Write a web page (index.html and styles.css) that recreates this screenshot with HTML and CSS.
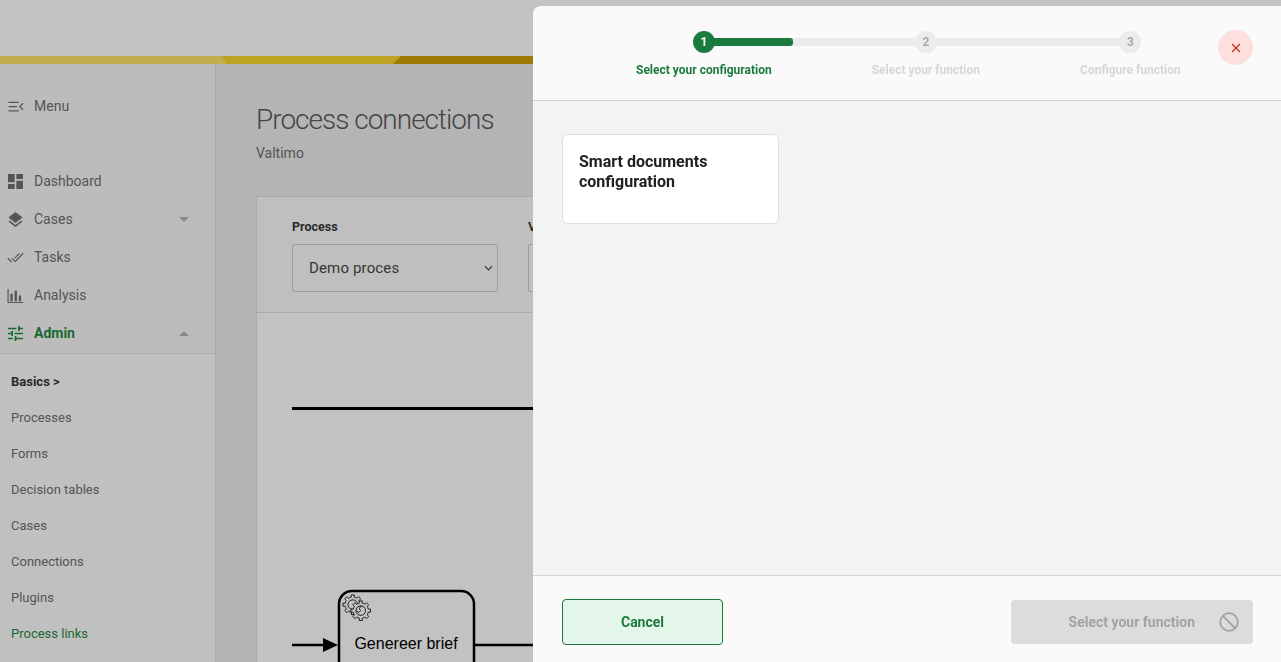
FILE: index.html

```html
<!DOCTYPE html>
<html lang="en">
<head>
  <meta charset="UTF-8">
  <title>Process connections</title>
  <link rel="stylesheet" href="styles.css">
</head>
<body>

  <div class="topbar"></div>
  <svg class="stripe" viewBox="0 0 1281 8" preserveAspectRatio="none">
    <rect width="1281" height="8" fill="#cda000"/>
    <polygon points="0,0 401,0 393,8 0,8" fill="#f7d82d"/>
    <polygon points="0,0 222,0 226,8 0,8" fill="#ffe569"/>
  </svg>

  <div class="page">
    <nav class="sidebar">
      <div class="nav-item menu-toggle">
        <svg class="nav-icon" viewBox="0 0 16 16"><path d="M0 3h11v1.300H0zM0 7.400h9v1.300H0zM0 12h11v1.300H0z" fill="#707070"/><path d="M15.500 4.500 12 8l3.500 3.500" fill="none" stroke="#707070" stroke-width="1.300"/></svg>
        <span>Menu</span>
      </div>
      <ul class="nav-list">
        <li class="nav-item">
          <svg class="nav-icon" viewBox="3 3 18 18"><path d="M3 13h8V3H3v10zm0 8h8v-6H3v6zm10 0h8V11h-8v10zm0-18v6h8V3h-8z"/></svg>
          <span>Dashboard</span>
        </li>
        <li class="nav-item">
          <svg class="nav-icon" viewBox="3 2 18 19"><path d="M11.990 18.540l-7.370-5.730L3 14.070l9 7 9-7-1.630-1.270-7.380 5.740zM12 16l7.360-5.730L21 9l-9-7-9 7 1.630 1.270L12 16z"/></svg>
          <span>Cases</span>
          <i class="caret down"></i>
        </li>
        <li class="nav-item">
          <svg class="nav-icon wide" viewBox="0 4 24 16"><path d="M18 7l-1.200-1.200-6.500 6.500 1.200 1.200L18 7zm4.400-1.600L11.660 16.200 7.480 12.200l-1.200 1.200 5.380 5.400L23.600 6.600l-1.200-1.200zM.4 13.600 6 19l1.200-1.200L1.600 12.400.4 13.600z"/></svg>
          <span>Tasks</span>
        </li>
        <li class="nav-item">
          <svg class="nav-icon wide" viewBox="0 0 17 16"><path d="M0 1h1.200v13.800H17V16H0zM3 6h2.500v8H3zM7.500 3h2.500v11H7.500zM12 8h2.500v6H12z"/></svg>
          <span>Analysis</span>
        </li>
        <li class="nav-item active">
          <svg class="nav-icon" viewBox="3 3 18 18"><path d="M3 17v2h6v-2H3zM3 5v2h10V5H3zm10 16v-2h8v-2h-8v-2h-2v6h2zM7 9v2H3v2h4v2h2V9H7zm14 4v-2H11v2h10zm-6-4h2V7h4V5h-4V3h-2v6z"/></svg>
          <span>Admin</span>
          <i class="caret up"></i>
        </li>
      </ul>
      <ul class="sub-list">
        <li class="sub-head">Basics &gt;</li>
        <li>Processes</li>
        <li>Forms</li>
        <li>Decision tables</li>
        <li>Cases</li>
        <li>Connections</li>
        <li>Plugins</li>
        <li class="current">Process links</li>
      </ul>
    </nav>

    <main class="content">
      <h1>Process connections</h1>
      <p class="subtitle">Valtimo</p>
      <section class="card">
        <div class="card-filters">
          <div class="field">
            <label>Process</label>
            <div class="select">Demo proces
              <svg viewBox="0 0 10 6"><path d="M1 1l4 4 4-4" fill="none" stroke="#444" stroke-width="1.300"/></svg>
            </div>
          </div>
          <div class="field">
            <label>Version</label>
            <div class="select"></div>
          </div>
        </div>
        <svg class="diagram" viewBox="0 0 984 349">
          <defs>
            <path id="gear" d="m 12,18 v -1.71335 c 0.352326,-0.0705 0.703932,-0.17838 1.047628,-0.32133 0.344416,-0.14465 0.665822,-0.32133 0.966377,-0.52145 l 1.19431,1.18005 1.567487,-1.57688 -1.195028,-1.18014 c 0.403376,-0.61394 0.683079,-1.29908 0.825447,-2.01824 l 1.622133,-0.01 v -2.2196 l -1.636514,0.01 c -0.07333,-0.35153 -0.178319,-0.70024 -0.323564,-1.04372 -0.145244,-0.34406 -0.321407,-0.6644 -0.522735,-0.96217 l 1.131035,-1.13631 -1.583305,-1.56293 -1.129598,1.13589 c -0.614052,-0.40108 -1.302883,-0.68093 -2.022633,-0.82247 l 0.0093,-1.61852 h -2.241173 l 0.0042,1.63124 c -0.353763,0.0736 -0.705369,0.17977 -1.049785,0.32371 -0.344415,0.14437 -0.665102,0.32092 -0.9635006,0.52046 l -1.1698628,-1.15823 -1.5667691,1.5792 1.1684265,1.15669 c -0.4026573,0.61283 -0.68308,1.29797 -0.8247287,2.01713 l -1.6588041,0.003 v 2.22174 l 1.6724648,-0.006 c 0.073327,0.35077 0.1797598,0.70243 0.3242851,1.04472 0.1452428,0.34448 0.3214064,0.6644 0.5227339,0.96066 l -1.1993431,1.19723 1.5840256,1.56011 1.1964668,-1.19348 c 0.6140517,0.40346 1.3028827,0.68232 2.0233517,0.82331 l 7.19e-4,1.69892 h 2.226848 z m 0.221462,-3.9957 c -1.788948,0.7502 -3.8576,-0.0928 -4.6097055,-1.87438 -0.7521065,-1.78321 0.090598,-3.84627 1.8802645,-4.59604 1.78823,-0.74936 3.856881,0.0929 4.608987,1.87437 0.752106,1.78165 -0.0906,3.84612 -1.879546,4.59605 z"/>
          </defs>
          <path d="M35 95.500H984" fill="none" stroke="#000" stroke-width="3"/>
          <path d="M35 332H72" fill="none" stroke="#000" stroke-width="2.500"/>
          <path d="M66 325l15 7-15 7z" fill="#000"/>
          <path d="M217 332H984" fill="none" stroke="#000" stroke-width="2.500"/>
          <rect x="82" y="278" width="135" height="120" rx="13" fill="#fff" stroke="#000" stroke-width="2.500"/>
          <use href="#gear" transform="translate(81,277) scale(1.360)" fill="#fff" stroke="#000" stroke-width=".6"/>
          <use href="#gear" transform="translate(89,283) scale(1.360)" fill="#fff" stroke="#000" stroke-width=".6"/>
          <text x="149" y="336" class="task-label">Genereer brief</text>
        </svg>
      </section>
    </main>
  </div>

  <div class="backdrop"></div>

  <aside class="drawer">
    <header class="drawer-head">
      <div class="stepper">
        <div class="step current">
          <div class="step-dot">1</div>
          <div class="step-name">Select your configuration</div>
        </div>
        <div class="step">
          <div class="step-dot">2</div>
          <div class="step-name">Select your function</div>
        </div>
        <div class="step">
          <div class="step-dot">3</div>
          <div class="step-name">Configure function</div>
        </div>
      </div>
      <button class="close-btn" aria-label="Close">
        <svg viewBox="0 0 10 10"><path d="M1 1l8 8M9 1l-8 8" fill="none" stroke="#d0281c" stroke-width="1.200"/></svg>
      </button>
    </header>
    <div class="drawer-body">
      <div class="config-card">Smart documents configuration</div>
    </div>
    <footer class="drawer-foot">
      <button class="btn-cancel">Cancel</button>
      <button class="btn-next">Select your function
        <svg viewBox="0 0 20 20"><circle cx="10" cy="10" r="8.800" fill="none" stroke="#a3a3a3" stroke-width="1.800"/><path d="M4 4l12 12" stroke="#a3a3a3" stroke-width="1.800"/></svg>
      </button>
    </footer>
  </aside>

</body>
</html>
```

FILE: styles.css

```css
* { box-sizing: border-box; }
html, body { height: 100%; }
body { margin: 0; overflow: hidden; background: #fff; font-family: Roboto, "Liberation Sans", sans-serif; color: #707070; display: flex; flex-direction: column; }
ul { list-style: none; margin: 0; padding: 0; }
button { font-family: inherit; cursor: pointer; }

.topbar { height: 56px; flex: none; background: #fff; }
.stripe { display: block; width: 100%; height: 8px; flex: none; }
.page { flex: 1; display: flex; min-height: 0; background: #ededed; }

/* sidebar */
.sidebar { width: 216px; flex: none; display: flex; flex-direction: column; background: #f8f8f8; border-right: 1px solid #e2e2e2; }
.nav-item { height: 38px; display: flex; align-items: center; padding-left: 8px; font-size: 14px; color: #707070; }
.nav-icon { width: 15px; height: 15px; margin-right: 11px; fill: #707070; flex: none; }
.nav-icon.wide { width: 17px; margin-left: -1px; margin-right: 10px; }
.menu-toggle { margin-top: 23px; margin-bottom: 37px; }
.menu-toggle .nav-icon { width: 16px; margin-right: 10px; }
.nav-item .caret { margin-left: auto; margin-right: 26px; width: 0; height: 0; border-left: 5px solid transparent; border-right: 5px solid transparent; }
.caret.down { border-top: 5px solid #b5b5b5; }
.caret.up { border-bottom: 5px solid #b5b5b5; }
.nav-item.active { color: #1f8a42; font-weight: 700; }
.nav-item.active .nav-icon { fill: #1f8a42; }
.sub-list { flex: 1; margin-top: 1px; padding-top: 10px; background: #fdfdfd; border-top: 1px solid #e2e2e2; }
.sub-list li { height: 36px; padding-left: 11px; font-size: 13px; line-height: 36px; color: #707070; }
.sub-list .sub-head { font-weight: 700; color: #383838; }
.sub-list .current { color: #1f8a42; }

/* main content */
.content { flex: 1; display: flex; flex-direction: column; padding: 37px 40px 0; min-width: 0; }
.content h1 { margin: 0; font-size: 28px; line-height: 38px; font-weight: 300; letter-spacing: -1px; color: #5c5c5c; }
.subtitle { margin: 4px 0 0; font-size: 14px; line-height: 20px; color: #707070; }
.card { flex: 1; margin-top: 33px; background: #fff; border: 1px solid #e0e0e0; border-bottom: none; overflow: hidden; }
.card-filters { height: 116px; padding: 22px 35px 0; display: flex; gap: 30px; background: #fbfbfb; border-bottom: 1px solid #e0e0e0; }
.field label { display: block; font-size: 12.500px; font-weight: 700; line-height: 16px; color: #383838; }
.select { margin-top: 9px; width: 206px; height: 48px; padding-left: 16px; display: flex; align-items: center; justify-content: space-between; border: 1px solid #d0d0d4; border-radius: 2px; font-size: 15px; color: #494949; letter-spacing: .15px; }
.select svg { width: 9px; height: 6px; margin-right: 4px; }
.diagram { display: block; width: 984px; height: 349px; }
.task-label { font-family: "Liberation Sans", Arial, sans-serif; font-size: 16px; text-anchor: middle; fill: #000; }

/* drawer on top of the page */
.backdrop { position: fixed; inset: 0; background: rgba(0, 0, 0, .24); }
.drawer { position: fixed; top: 6px; left: 533px; right: 0; bottom: 0; display: flex; flex-direction: column; background: #fafafa; border-radius: 8px 0 0 0; overflow: hidden; }
.drawer-head { height: 95px; flex: none; position: relative; padding: 25px 0 0 103px; border-bottom: 1px solid #d4d4d4; }
.stepper { position: relative; display: inline-flex; gap: 100px; }
.stepper::before { content: ""; position: absolute; left: 67px; width: 427px; top: 7px; height: 8px; background: #ececec; }
.stepper::after { content: ""; position: absolute; left: 67px; width: 90px; top: 7px; height: 8px; border-radius: 0 3px 3px 0; background: #1b7a3d; }
.step { position: relative; z-index: 1; display: flex; flex-direction: column; align-items: center; }
.step-dot { width: 22px; height: 22px; border-radius: 50%; display: flex; align-items: center; justify-content: center; background: #ececec; color: #a8a8a8; font-size: 12px; font-weight: 700; }
.step-name { margin-top: 9px; font-size: 12px; line-height: 16px; font-weight: 700; color: #d6d6d6; white-space: nowrap; }
.step.current .step-dot { background: #1b7a3d; color: #fff; }
.step.current .step-name { color: #1b7a3d; }
.close-btn { position: absolute; top: 24px; left: 685px; width: 35px; height: 35px; padding: 0; border: none; border-radius: 50%; background: #fde0dd; display: flex; align-items: center; justify-content: center; }
.close-btn svg { width: 10px; height: 10px; }
.drawer-body { flex: 1; padding: 33px 29px; background: #f2f4f3; }
.config-card { width: 217px; height: 90px; padding: 17px 16px; background: #fff; border: 1px solid #dedede; border-radius: 6px; font-size: 16px; line-height: 20px; font-weight: 700; color: #212121; }
.drawer-foot { height: 87px; flex: none; display: flex; align-items: flex-start; justify-content: space-between; padding: 23px 28px 0 29px; border-top: 1px solid #d4d4d4; }
.btn-cancel { width: 161px; height: 46px; background: #e4f5e9; border: 1px solid #1b7a3d; border-radius: 4px; color: #1b7a3d; font-size: 14px; font-weight: 700; }
.btn-next { width: 242px; height: 44px; margin-top: 1px; padding: 0 14px 0 0; display: flex; align-items: center; justify-content: flex-end; gap: 24px; background: #dcdcdc; border: none; border-radius: 4px; color: #a3a3a3; font-size: 14px; font-weight: 700; }
.btn-next svg { width: 20px; height: 20px; }
```
